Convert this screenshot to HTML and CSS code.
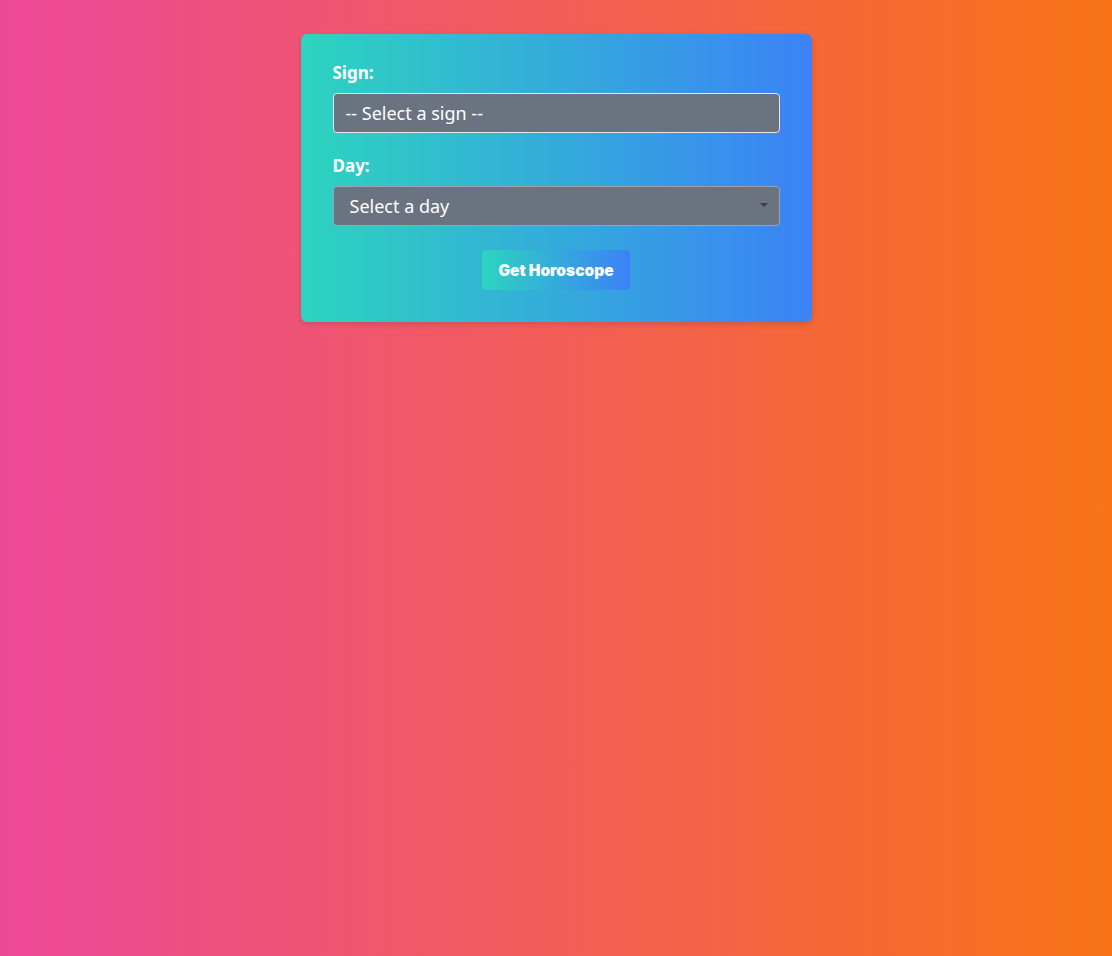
FILE: index.html
```html
<!DOCTYPE html>
<html>
<head>
<meta charset="utf-8">
<link rel="stylesheet" href="styles.css">
</head>
<body>
<main class="page">
  <form class="card">
    <label class="label label-sign" for="sign">Sign:</label>
    <div class="field field-sign">
      <span class="field-text">-- Select a sign --</span>
    </div>
    <label class="label label-day" for="day">Day:</label>
    <div class="field field-day">
      <span class="field-text">Select a day</span>
      <span class="caret"></span>
    </div>
    <div class="actions">
      <button type="button" class="btn">Get Horoscope</button>
    </div>
  </form>
</main>
</body>
</html>
```
FILE: styles.css
```css
html, body {
  margin: 0;
  padding: 0;
  height: 100%;
}
body {
  background: linear-gradient(to right, #ec4899, #f97316);
  font-family: "Noto Sans", "Open Sans", sans-serif;
  color: #fff;
}
.page {
  display: flex;
  justify-content: center;
  padding-top: 34px;
}
.card {
  width: 447px;
  padding: 32px;
  border-radius: 6px;
  background: linear-gradient(to right, #2dd4bf, #3b82f6);
  box-shadow: 0 2px 6px rgba(0,0,0,0.15);
  display: flex;
  flex-direction: column;
}
.label {
  display: block;
  font-weight: 700;
  font-size: 17px;
  line-height: 24px;
  margin-bottom: 8px;
}
.label-sign {
  margin-top: -5px;
}
.label-day {
  margin-top: 21px;
}
.field {
  position: relative;
  box-sizing: border-box;
  height: 40px;
  border-radius: 4px;
  background: #6b7280;
  display: flex;
  align-items: center;
  font-size: 18px;
}
.field-sign {
  border: 1px solid #e5e7eb;
  padding-left: 12px;
}
.field-day {
  border: 1px solid #9ca3af;
  padding-left: 16px;
}
.caret {
  position: absolute;
  right: 11px;
  top: 16px;
  width: 0;
  height: 0;
  border-left: 4px solid transparent;
  border-right: 4px solid transparent;
  border-top: 4px solid #3a404b;
}
.actions {
  display: flex;
  justify-content: center;
  margin-top: 24px;
}
.btn {
  width: 148px;
  height: 40px;
  border: none;
  border-radius: 4px;
  background: linear-gradient(to right, #2dd4bf, #3b82f6);
  color: #fff;
  font-family: "Inter", "Noto Sans", sans-serif;
  font-weight: 900;
  font-size: 15.5px;
  padding: 0;
}
```
